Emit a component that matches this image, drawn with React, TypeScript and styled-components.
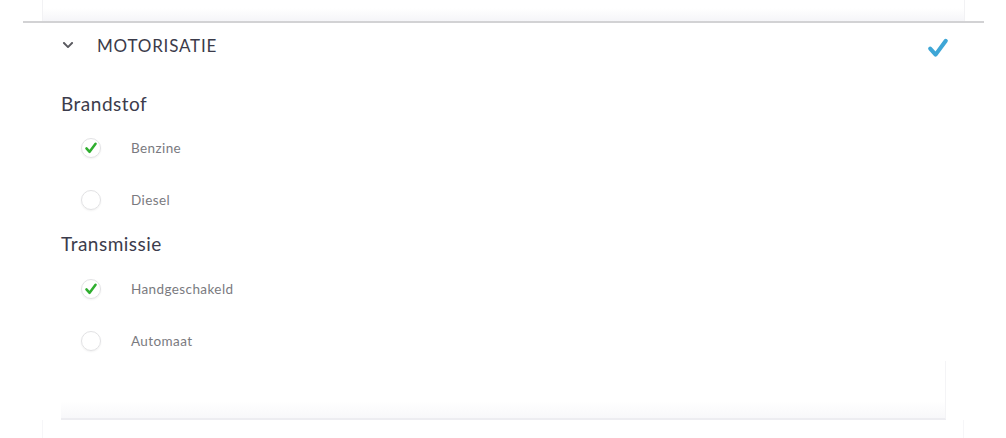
import { createGlobalStyle, styled } from "styled-components";
import { FaChevronDown } from "react-icons/fa";

const GlobalStyle = createGlobalStyle`
  body {
    margin: 0;
    background: #ffffff;
    font-family: Lato, "Noto Sans", sans-serif;
  }
`;

const Page = styled.div`
  padding: 0 22px 0 23px;
`;

const TopCard = styled.div`
  margin: 0 19px;
  height: 21px;
  background: linear-gradient(#ffffff 40%, #f5f5f8);
  border-left: 1px solid #f2f2f4;
  border-right: 1px solid #f2f2f4;
  box-sizing: border-box;
`;

const Panel = styled.section`
  border-top: 2px solid #d2d2d4;
`;

const Header = styled.div`
  display: flex;
  align-items: center;
  height: 44px;
  padding: 0 34px 2px 39px;
  color: #3b3b4a;
`;

const Title = styled.span`
  flex: 1;
  margin-left: 23px;
  font-size: 17px;
  letter-spacing: 0.8px;
`;

const HeaderCheck = styled.span`
  display: flex;
  margin-top: 6px;
`;

const Body = styled.div`
  padding: 0 38px;
`;

const GroupTitle = styled.h3<{ $first?: boolean }>`
  margin: ${(p) => (p.$first ? "23px" : "16px")} 0 0;
  font-size: 19px;
  font-weight: 400;
  line-height: 24px;
  letter-spacing: 0.5px;
  color: #3c3c4c;
`;

const OptionList = styled.div<{ $first?: boolean }>`
  display: flex;
  flex-direction: column;
  gap: 20px;
  margin-top: ${(p) => (p.$first ? "16px" : "17px")};
`;

const Option = styled.label`
  display: flex;
  align-items: center;
  height: 32px;
  padding-left: 20px;
  gap: 30px;
  font-size: 13.5px;
  letter-spacing: 0.4px;
  color: #7a7a80;
`;

const Radio = styled.span`
  display: flex;
  align-items: center;
  justify-content: center;
  width: 20px;
  height: 20px;
  border-radius: 50%;
  border: 1px solid #e2e2e4;
  box-shadow: 0 1px 2px rgba(0, 0, 0, 0.06);
  box-sizing: border-box;
`;

const Footer = styled.div`
  margin-top: 4px;
  height: 57px;
  background: linear-gradient(#ffffff 70%, #f8f8fa);
  border-right: 1px solid #f4f4f6;
  border-bottom: 2px solid #ededf1;
`;

const BottomCard = styled.div`
  margin: 0 20px 0 19px;
  height: 18px;
  border-left: 1px solid #f6f6f8;
  border-right: 1px solid #f6f6f8;
`;

const Check = ({ color, size, weight }: { color: string; size: number; weight: number }) => (
  <svg width={size} height={size} viewBox="0 0 20 20">
    <path
      d="M3.5 10.5 L8 15.5 L16.5 4"
      fill="none"
      stroke={color}
      strokeWidth={weight}
      strokeLinecap="round"
      strokeLinejoin="round"
    />
  </svg>
);

const groups = [
  { title: "Brandstof", options: [{ label: "Benzine", on: true }, { label: "Diesel", on: false }] },
  {
    title: "Transmissie",
    options: [{ label: "Handgeschakeld", on: true }, { label: "Automaat", on: false }],
  },
];

export default function App() {
  return (
    <>
      <GlobalStyle />
      <Page>
        <TopCard />
        <Panel>
          <Header>
            <FaChevronDown size={12} color="#5a5a60" />
            <Title>MOTORISATIE</Title>
            <HeaderCheck>
              <Check color="#3ea6d6" size={24} weight={3.4} />
            </HeaderCheck>
          </Header>
          <Body>
            {groups.map((g, i) => (
              <div key={g.title}>
                <GroupTitle $first={i === 0}>{g.title}</GroupTitle>
                <OptionList $first={i === 0}>
                  {g.options.map((o) => (
                    <Option key={o.label}>
                      <Radio>{o.on && <Check color="#2fae2f" size={14} weight={3.6} />}</Radio>
                      {o.label}
                    </Option>
                  ))}
                </OptionList>
              </div>
            ))}
            <Footer />
          </Body>
        </Panel>
        <BottomCard />
      </Page>
    </>
  );
}
